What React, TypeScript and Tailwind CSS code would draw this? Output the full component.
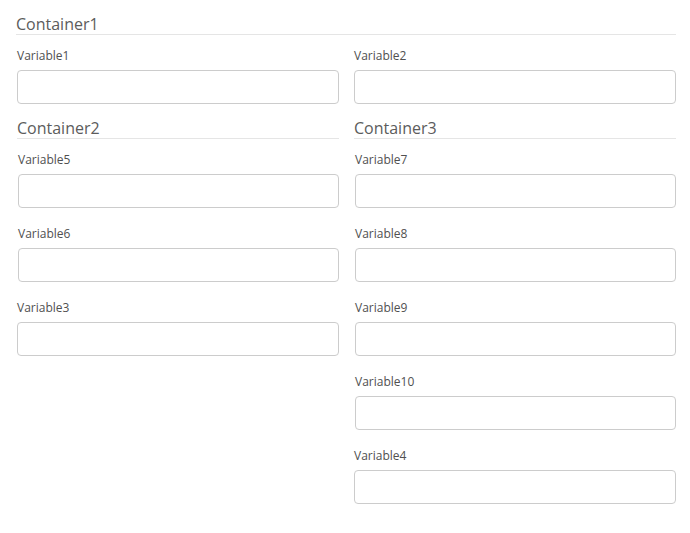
import React from "react";

const font = { fontFamily: '"Open Sans", "Noto Sans", sans-serif' };

function Field({ label }: { label: string }) {
  return (
    <div className="mb-[18px]">
      <div className="h-4 text-[12px] leading-4 text-[#505050] mb-[6px]">{label}</div>
      <div className="h-[34px] w-full rounded-[4px] border border-[#cccccc] bg-white" />
    </div>
  );
}

function TopField({ label }: { label: string }) {
  return (
    <div className="mb-[15px]">
      <div className="h-4 text-[12px] leading-4 text-[#505050] mb-[6px]">{label}</div>
      <div className="h-[34px] w-full rounded-[4px] border border-[#cccccc] bg-white" />
    </div>
  );
}

function Heading({ title }: { title: string }) {
  return (
    <div className="h-[20px] border-b border-[#e5e5e5] text-[16px] leading-[19px] text-[#5c5c5c]">
      {title}
    </div>
  );
}

export default function App() {
  return (
    <div className="w-[690px] h-[533px] bg-white" style={font}>
      <div className="pt-[15px] pl-[16px] w-[676px]">
        <Heading title="Container1" />
        <div className="mt-[13px] pl-px grid grid-cols-[322px_322px] gap-x-[15px]">
          <div>
            <TopField label="Variable1" />
            <Heading title="Container2" />
            <div className="mt-[13px] pl-px">
              <Field label="Variable5" />
              <Field label="Variable6" />
            </div>
            <Field label="Variable3" />
          </div>
          <div>
            <TopField label="Variable2" />
            <Heading title="Container3" />
            <div className="mt-[13px] pl-px">
              <Field label="Variable7" />
              <Field label="Variable8" />
              <Field label="Variable9" />
              <Field label="Variable10" />
            </div>
            <Field label="Variable4" />
          </div>
        </div>
      </div>
    </div>
  );
}
